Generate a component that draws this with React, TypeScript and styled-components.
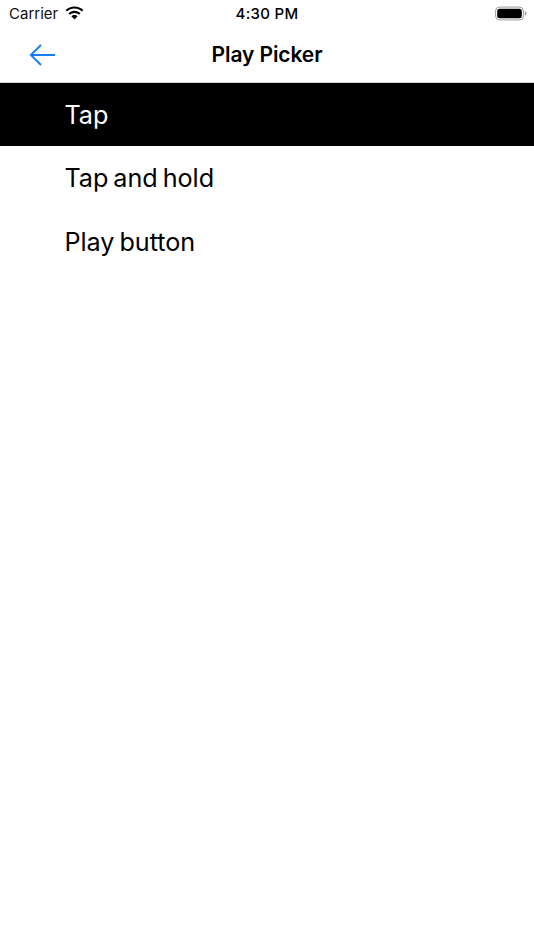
import React from "react";
import styled, { createGlobalStyle } from "styled-components";

const Global = createGlobalStyle`
  html, body { margin: 0; padding: 0; background: #fff; }
  body { font-family: Inter, "Liberation Sans", sans-serif; color: #000; }
`;

const Screen = styled.div`
  width: 534px;
  height: 950px;
  background: #fff;
  overflow: hidden;
`;

const StatusBar = styled.div`
  height: 27px;
  display: grid;
  grid-template-columns: 1fr auto 1fr;
  align-items: center;
  padding: 0 9px;
`;

const StatusLeft = styled.div`
  display: flex;
  align-items: center;
  gap: 6px;
  font-size: 15px;
  color: #111;
`;

const Time = styled.div`
  font-size: 15px;
  font-weight: 500;
  letter-spacing: 0.3px;
`;

const StatusRight = styled.div`
  display: flex;
  justify-content: flex-end;
  margin-right: -2px;
`;

const NavBar = styled.div`
  height: 55px;
  display: grid;
  grid-template-columns: 1fr auto 1fr;
  align-items: center;
  padding: 0 29px;
  border-bottom: 1px solid #d8d8d8;
`;

const BackIcon = styled.svg`
  width: 27px;
  height: 22px;
  display: block;
`;

const Title = styled.div`
  font-size: 21px;
  font-weight: 600;
  letter-spacing: -0.1px;
`;

const List = styled.div`
  display: flex;
  flex-direction: column;
`;

const Row = styled.div<{ $selected?: boolean }>`
  height: 63.45px;
  display: flex;
  align-items: center;
  padding-left: 64.5px;
  font-size: 25.2px;
  font-weight: 400;
  word-spacing: -2px;
  letter-spacing: -0.05px;
  background: ${(p) => (p.$selected ? "#000" : "#fff")};
  color: ${(p) => (p.$selected ? "#fff" : "#000")};
`;

const Wifi = () => (
  <svg width="21" height="15" viewBox="0 0 20 15" aria-hidden="true">
    <path d="M10 2.6c2.9 0 5.500 1.100 7.500 3l1.400-1.500C16.600 1.900 13.400.6 10 .6S3.400 1.900 1.100 4.100L2.500 5.600c2-1.900 4.600-3 7.500-3z" fill="#000" />
    <path d="M10 6.900c1.700 0 3.300.7 4.500 1.800l1.500-1.500C14.400 5.700 12.300 4.800 10 4.800S5.600 5.700 4 7.200l1.500 1.500C6.700 7.600 8.300 6.900 10 6.900z" fill="#000" />
    <path d="M10 9c-1.200 0-2.300.5-3.100 1.200L10 13.600l3.100-3.400C12.300 9.500 11.200 9 10 9z" fill="#000" />
  </svg>
);

const Battery = () => (
  <svg width="32" height="15" viewBox="0 0 32 15" aria-hidden="true">
    <rect x="0.6" y="1.100" width="27.800" height="12.800" rx="3.800" fill="none" stroke="#9a9a9a" strokeWidth="1" />
    <rect x="2.200" y="2.700" width="24.600" height="9.600" rx="2.400" fill="#000" />
    <path d="M29.800 5.300c1 .3 1.600 1.200 1.600 2.200s-.6 1.900-1.600 2.200z" fill="#9a9a9a" />
  </svg>
);

export default function App() {
  return (
    <Screen>
      <Global />
      <StatusBar>
        <StatusLeft>
          <span>Carrier</span>
          <Wifi />
        </StatusLeft>
        <Time>4:30 PM</Time>
        <StatusRight>
          <Battery />
        </StatusRight>
      </StatusBar>
      <NavBar>
        <BackIcon viewBox="0 0 27 22" aria-hidden="true">
          <path d="M26 11H2M12 1 1.800 11 12 21" fill="none" stroke="#147efb" strokeWidth="1.900" />
        </BackIcon>
        <Title>Play Picker</Title>
        <span />
      </NavBar>
      <List>
        <Row $selected>Tap</Row>
        <Row>Tap and hold</Row>
        <Row>Play button</Row>
      </List>
    </Screen>
  );
}
